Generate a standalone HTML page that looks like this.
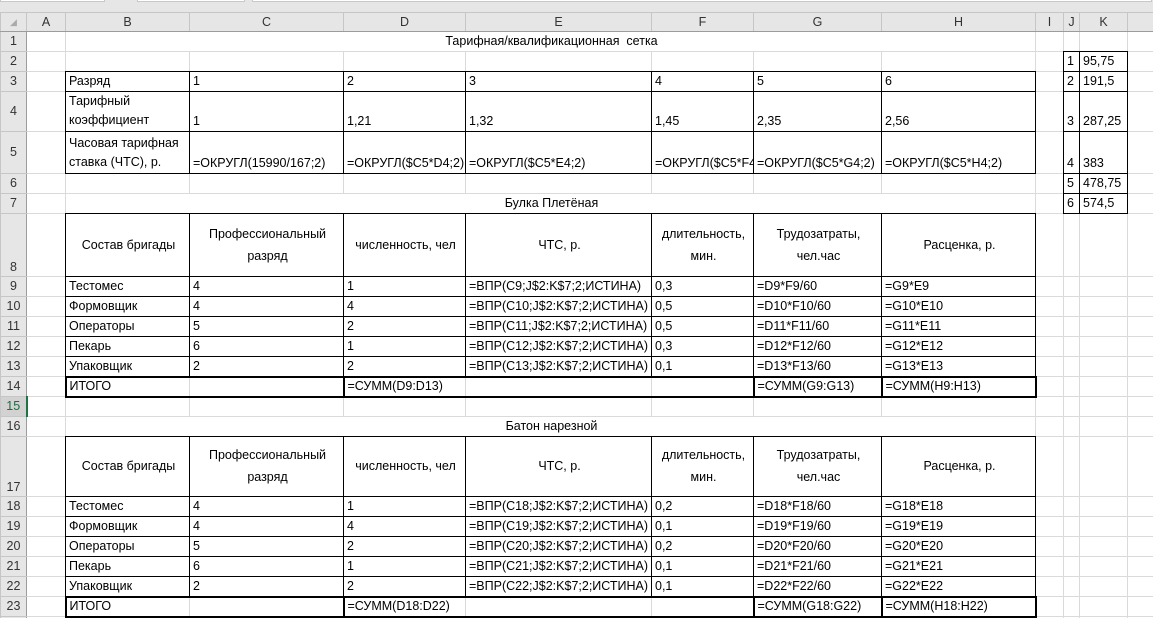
<!DOCTYPE html>
<html><head><meta charset="utf-8">
<style>
*{margin:0;padding:0;box-sizing:border-box}
html,body{width:1153px;height:618px;overflow:hidden;background:#fff}
body{font-family:"Liberation Sans","DejaVu Sans",sans-serif;font-size:12.5px;color:#000;position:relative}
.strip{position:absolute;left:0;top:0;width:1153px;height:12px;background:#e6e6e6}
.strip div{position:absolute;top:0;height:2px;background:#fff;border:1px solid #c8c8c8;border-top:none}
table{position:absolute;left:0;top:12px;border-collapse:collapse;table-layout:fixed;width:1153px}
td,th{border:1px solid #dadada;white-space:nowrap;overflow:hidden;vertical-align:bottom;padding:0 1px 1px 3px;line-height:17px;font-weight:normal}
th{background:#e6e6e6;color:#333;text-align:center;vertical-align:middle;border-color:#c6c6c6;padding:0}
td.rh{background:#e6e6e6;color:#333;text-align:center;vertical-align:middle;border-color:#c6c6c6;border-right:1px solid #9c9c9c;padding:0}
tr.hdr th{border-bottom:1px solid #9c9c9c}
.b{border:1px double #000}
.t{border-top:2px solid #000;border-bottom:2px solid #000}
.tl{border-left:2px solid #000}
.tr{border-right:2px solid #000}
.c{text-align:center}
.w{white-space:normal;line-height:19px}
.m{vertical-align:middle;text-align:center;white-space:normal;line-height:22px}
.sel{background:#d2d2d2!important;border-right:2px solid #217346!important;color:#1e6b3f!important}
</style></head><body>
<div class="strip"><div style="left:0;width:105px"></div><div style="left:137px;width:108px"></div><div style="left:252px;width:900px"></div></div>
<table>
<colgroup><col style="width:26px"><col style="width:39px"><col style="width:124px"><col style="width:154px"><col style="width:122px"><col style="width:186px"><col style="width:102px"><col style="width:128px"><col style="width:154px"><col style="width:28px"><col style="width:16px"><col style="width:48px"><col style="width:26px"></colgroup>
<tr class="hdr" style="height:19px"><th style="font-size:9px;color:#aaa">◢</th><th>A</th><th>B</th><th>C</th><th>D</th><th>E</th><th>F</th><th>G</th><th>H</th><th>I</th><th>J</th><th>K</th><th></th></tr>
<tr style="height:20px"><td class="rh">1</td><td></td><td colspan="7" class="c">Тарифная/квалификационная&nbsp; сетка</td><td></td><td></td><td></td><td></td></tr>
<tr style="height:20px"><td class="rh">2</td><td></td><td></td><td></td><td></td><td></td><td></td><td></td><td></td><td></td><td class="b">1</td><td class="b">95,75</td><td></td></tr>
<tr style="height:20px"><td class="rh">3</td><td></td><td class="b">Разряд</td><td class="b">1</td><td class="b">2</td><td class="b">3</td><td class="b">4</td><td class="b">5</td><td class="b">6</td><td></td><td class="b">2</td><td class="b">191,5</td><td></td></tr>
<tr style="height:40px"><td class="rh">4</td><td></td><td class="b w">Тарифный коэффициент</td><td class="b">1</td><td class="b">1,21</td><td class="b">1,32</td><td class="b">1,45</td><td class="b">2,35</td><td class="b">2,56</td><td></td><td class="b">3</td><td class="b">287,25</td><td></td></tr>
<tr style="height:42px"><td class="rh">5</td><td></td><td class="b w">Часовая тарифная ставка (ЧТС), р.</td><td class="b">=ОКРУГЛ(15990/167;2)</td><td class="b">=ОКРУГЛ($C5*D4;2)</td><td class="b">=ОКРУГЛ($C5*E4;2)</td><td class="b">=ОКРУГЛ($C5*F4;2)</td><td class="b">=ОКРУГЛ($C5*G4;2)</td><td class="b">=ОКРУГЛ($C5*H4;2)</td><td></td><td class="b">4</td><td class="b">383</td><td></td></tr>
<tr style="height:20px"><td class="rh">6</td><td></td><td></td><td></td><td></td><td></td><td></td><td></td><td></td><td></td><td class="b">5</td><td class="b">478,75</td><td></td></tr>
<tr style="height:20px"><td class="rh">7</td><td></td><td colspan="7" class="c">Булка Плетёная</td><td></td><td class="b">6</td><td class="b">574,5</td><td></td></tr>
<tr style="height:63px"><td class="rh" style="vertical-align:bottom">8</td><td></td><td class="b m">Состав бригады</td><td class="b m">Профессиональный разряд</td><td class="b m">численность, чел</td><td class="b m">ЧТС, р.</td><td class="b m">длительность, мин.</td><td class="b m">Трудозатраты, чел.час</td><td class="b m">Расценка, р.</td><td></td><td></td><td></td><td></td></tr>
<tr style="height:20px"><td class="rh">9</td><td></td><td class="b">Тестомес</td><td class="b">4</td><td class="b">1</td><td class="b">=ВПР(C9;J$2:K$7;2;ИСТИНА)</td><td class="b">0,3</td><td class="b">=D9*F9/60</td><td class="b">=G9*E9</td><td></td><td></td><td></td><td></td></tr>
<tr style="height:20px"><td class="rh">10</td><td></td><td class="b">Формовщик</td><td class="b">4</td><td class="b">4</td><td class="b">=ВПР(C10;J$2:K$7;2;ИСТИНА)</td><td class="b">0,5</td><td class="b">=D10*F10/60</td><td class="b">=G10*E10</td><td></td><td></td><td></td><td></td></tr>
<tr style="height:20px"><td class="rh">11</td><td></td><td class="b">Операторы</td><td class="b">5</td><td class="b">2</td><td class="b">=ВПР(C11;J$2:K$7;2;ИСТИНА)</td><td class="b">0,5</td><td class="b">=D11*F11/60</td><td class="b">=G11*E11</td><td></td><td></td><td></td><td></td></tr>
<tr style="height:20px"><td class="rh">12</td><td></td><td class="b">Пекарь</td><td class="b">6</td><td class="b">1</td><td class="b">=ВПР(C12;J$2:K$7;2;ИСТИНА)</td><td class="b">0,3</td><td class="b">=D12*F12/60</td><td class="b">=G12*E12</td><td></td><td></td><td></td><td></td></tr>
<tr style="height:20px"><td class="rh">13</td><td></td><td class="b">Упаковщик</td><td class="b">2</td><td class="b">2</td><td class="b">=ВПР(C13;J$2:K$7;2;ИСТИНА)</td><td class="b">0,1</td><td class="b">=D13*F13/60</td><td class="b">=G13*E13</td><td></td><td></td><td></td><td></td></tr>
<tr style="height:20px"><td class="rh">14</td><td></td><td class="t tl">ИТОГО</td><td class="t"></td><td class="t tl">=СУММ(D9:D13)</td><td class="t"></td><td class="t"></td><td class="t tl">=СУММ(G9:G13)</td><td class="t tl tr">=СУММ(H9:H13)</td><td></td><td></td><td></td><td></td></tr>
<tr style="height:20px"><td class="rh sel">15</td><td></td><td></td><td></td><td></td><td></td><td></td><td></td><td></td><td></td><td></td><td></td><td></td></tr>
<tr style="height:20px"><td class="rh">16</td><td></td><td colspan="7" class="c">Батон нарезной</td><td></td><td></td><td></td><td></td></tr>
<tr style="height:60px"><td class="rh" style="vertical-align:bottom">17</td><td></td><td class="b m">Состав бригады</td><td class="b m">Профессиональный разряд</td><td class="b m">численность, чел</td><td class="b m">ЧТС, р.</td><td class="b m">длительность, мин.</td><td class="b m">Трудозатраты, чел.час</td><td class="b m">Расценка, р.</td><td></td><td></td><td></td><td></td></tr>
<tr style="height:20px"><td class="rh">18</td><td></td><td class="b">Тестомес</td><td class="b">4</td><td class="b">1</td><td class="b">=ВПР(C18;J$2:K$7;2;ИСТИНА)</td><td class="b">0,2</td><td class="b">=D18*F18/60</td><td class="b">=G18*E18</td><td></td><td></td><td></td><td></td></tr>
<tr style="height:20px"><td class="rh">19</td><td></td><td class="b">Формовщик</td><td class="b">4</td><td class="b">4</td><td class="b">=ВПР(C19;J$2:K$7;2;ИСТИНА)</td><td class="b">0,1</td><td class="b">=D19*F19/60</td><td class="b">=G19*E19</td><td></td><td></td><td></td><td></td></tr>
<tr style="height:20px"><td class="rh">20</td><td></td><td class="b">Операторы</td><td class="b">5</td><td class="b">2</td><td class="b">=ВПР(C20;J$2:K$7;2;ИСТИНА)</td><td class="b">0,2</td><td class="b">=D20*F20/60</td><td class="b">=G20*E20</td><td></td><td></td><td></td><td></td></tr>
<tr style="height:20px"><td class="rh">21</td><td></td><td class="b">Пекарь</td><td class="b">6</td><td class="b">1</td><td class="b">=ВПР(C21;J$2:K$7;2;ИСТИНА)</td><td class="b">0,1</td><td class="b">=D21*F21/60</td><td class="b">=G21*E21</td><td></td><td></td><td></td><td></td></tr>
<tr style="height:20px"><td class="rh">22</td><td></td><td class="b">Упаковщик</td><td class="b">2</td><td class="b">2</td><td class="b">=ВПР(C22;J$2:K$7;2;ИСТИНА)</td><td class="b">0,1</td><td class="b">=D22*F22/60</td><td class="b">=G22*E22</td><td></td><td></td><td></td><td></td></tr>
<tr style="height:20px"><td class="rh">23</td><td></td><td class="t tl">ИТОГО</td><td class="t"></td><td class="t tl">=СУММ(D18:D22)</td><td class="t"></td><td class="t"></td><td class="t tl">=СУММ(G18:G22)</td><td class="t tl tr">=СУММ(H18:H22)</td><td></td><td></td><td></td><td></td></tr>
<tr style="height:20px"><td class="rh">24</td><td></td><td></td><td></td><td></td><td></td><td></td><td></td><td></td><td></td><td></td><td></td><td></td></tr>
</table>
</body></html>
